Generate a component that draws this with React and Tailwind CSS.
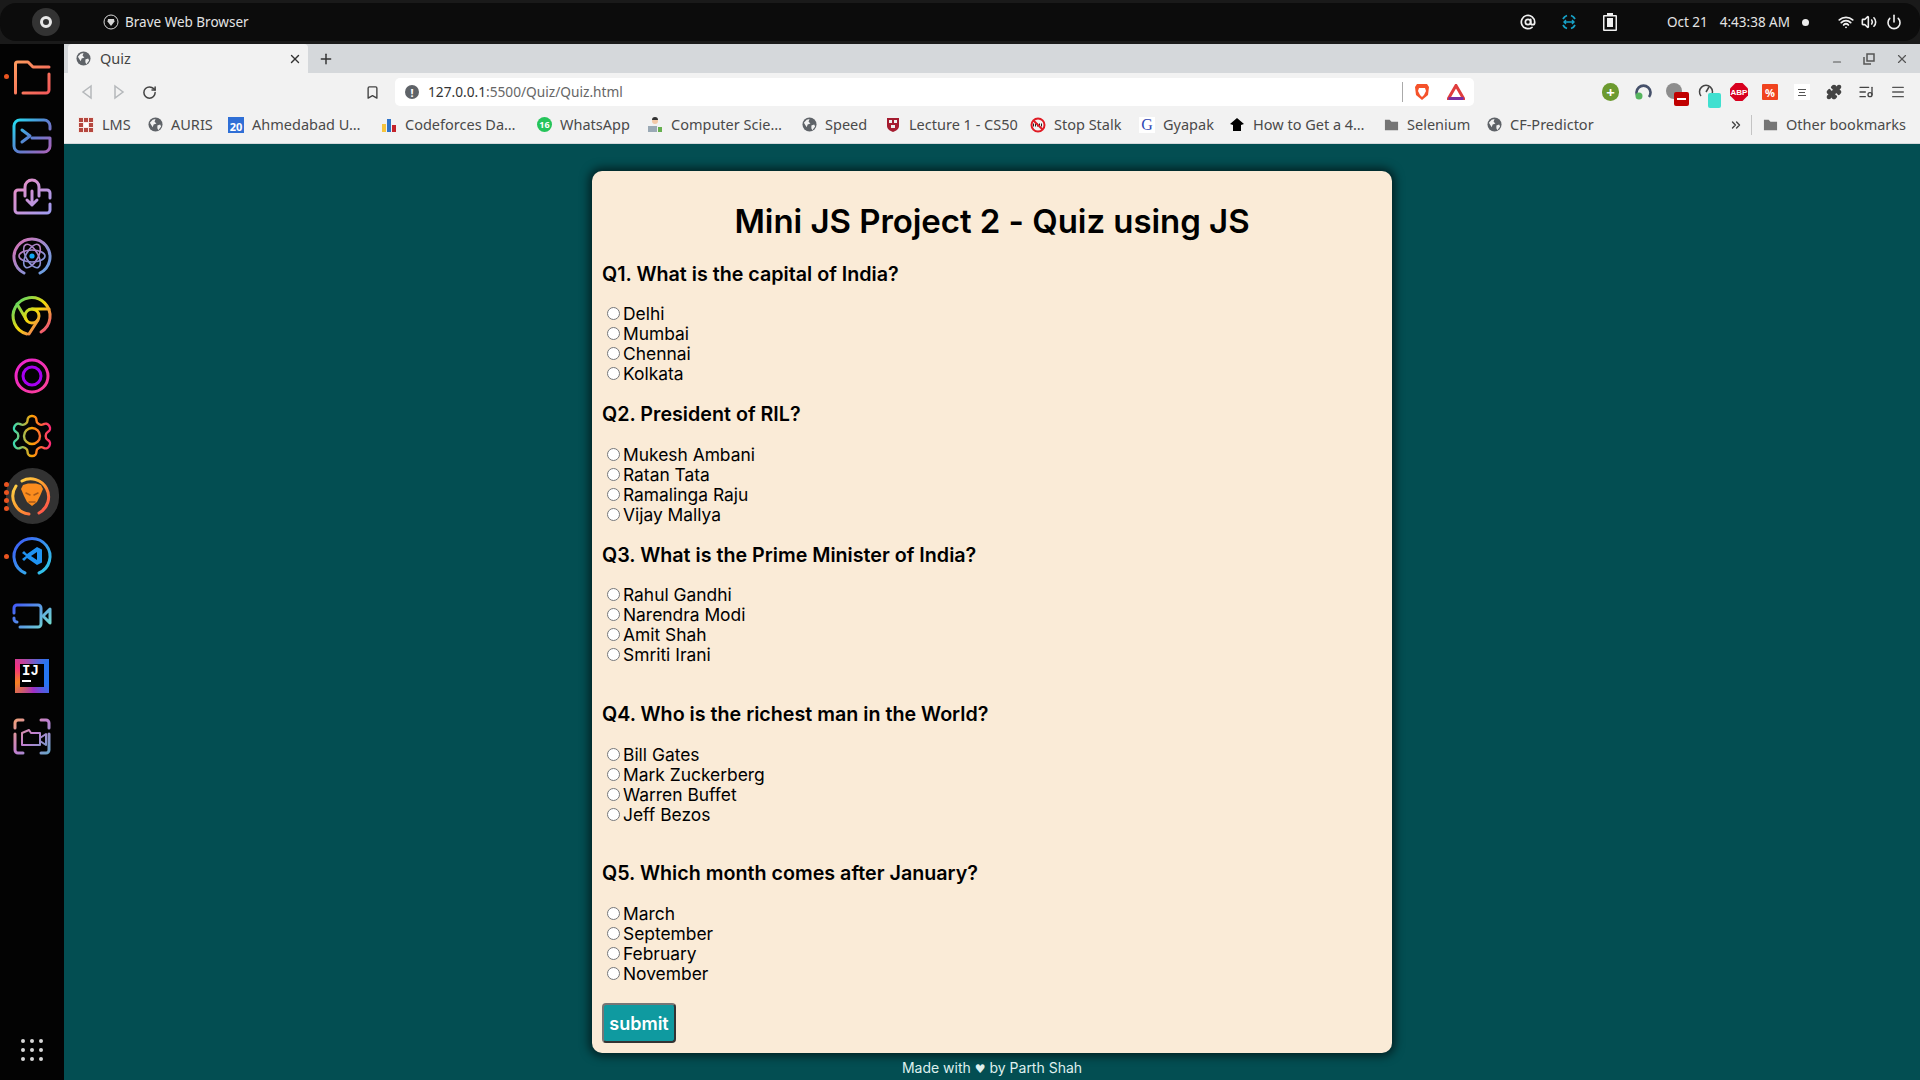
import React from "react";
import { AtSign, Wifi, Volume2, Power, Puzzle, Bookmark, RotateCw, Plus, X, Minus, ChevronsRight, Menu, ListMusic } from "lucide-react";

const questions = [
  { q: "Q1. What is the capital of India?", top: "mt-[21px]", gap: "mt-[18px]", options: ["Delhi", "Mumbai", "Chennai", "Kolkata"] },
  { q: "Q2. President of RIL?", top: "mt-[18px]", gap: "mt-[19px]", options: ["Mukesh Ambani", "Ratan Tata", "Ramalinga Raju", "Vijay Mallya"] },
  { q: "Q3. What is the Prime Minister of India?", top: "mt-[18px]", gap: "mt-[18px]", options: ["Rahul Gandhi", "Narendra Modi", "Amit Shah", "Smriti Irani"] },
  { q: "Q4. Who is the richest man in the World?", top: "mt-[37px]", gap: "mt-[19px]", options: ["Bill Gates", "Mark Zuckerberg", "Warren Buffet", "Jeff Bezos"] },
  { q: "Q5. Which month comes after January?", top: "mt-[36px]", gap: "mt-[19px]", options: ["March", "September", "February", "November"] },
];

// gradient-stroked dock icon, 48 box centred in a 60px row
function DockIcon({ id, stops, children, active, dots }) {
  return (
    <div className="relative flex h-[60px] w-16 items-center justify-center">
      {active && <div className="absolute left-[6px] top-[2px] h-[56px] w-[53px] rounded-full bg-[#323232]" />}
      {dots && (
        <div className="absolute left-[4px] top-0 flex h-full flex-col justify-center gap-[3px]">
          {Array.from({ length: dots }).map((_, i) => (
            <div key={i} className="h-[5px] w-[5px] rounded-full bg-[#e95420]" />
          ))}
        </div>
      )}
      <svg viewBox="0 0 48 48" className="relative h-12 w-12" fill="none" stroke={`url(#${id})`} strokeWidth="3" strokeLinecap="round" strokeLinejoin="round">
        <defs>
          <linearGradient id={id} gradientUnits="userSpaceOnUse" x1="5" y1="5" x2="43" y2="43">
            {stops.map((c, i) => (
              <stop key={i} offset={i / (stops.length - 1)} stopColor={c} />
            ))}
          </linearGradient>
        </defs>
        {children}
      </svg>
    </div>
  );
}

function Dock() {
  return (
    <div className="flex w-16 shrink-0 flex-col items-center bg-[#030303] pt-[2px]">
      <DockIcon id="d1" stops={["#ffa25e", "#f2555a"]} dots={1}>
        <path d="M7.500 41V12a2 2 0 0 1 2-2H20l5 5h16" />
        <path d="M15 41h23a3 3 0 0 0 3-3V22" />
      </DockIcon>
      <DockIcon id="d2" stops={["#1de9f6", "#5a7fd0", "#b65fb5"]}>
        <path d="M42 17v-3a6 6 0 0 0-6-6H12a6 6 0 0 0-6 6v20a6 6 0 0 0 6 6h24a6 6 0 0 0 6-6v-8H24" />
        <path d="M14 18l8 6-8 6" />
      </DockIcon>
      <DockIcon id="d3" stops={["#f48cc0", "#9c9cf2"]}>
        <path d="M16 18h-6a3 3 0 0 0-3 3v17a3 3 0 0 0 3 3h29a3 3 0 0 0 3-3v-6" />
        <path d="M42 26v-5a3 3 0 0 0-3-3h-6" />
        <path d="M17 24v-9a7 7 0 0 1 14 0v9" />
        <path d="M24 19v14M19 28l5 5 5-5" />
      </DockIcon>
      <DockIcon id="d4" stops={["#e26db0", "#5aa6ea"]}>
        <path d="M16 41a18 18 0 1 1 16 0" />
        <ellipse cx="24" cy="24" rx="13" ry="6" strokeWidth="1.600" />
        <ellipse cx="24" cy="24" rx="13" ry="6" strokeWidth="1.600" transform="rotate(60 24 24)" />
        <ellipse cx="24" cy="24" rx="13" ry="6" strokeWidth="1.600" transform="rotate(120 24 24)" />
        <circle cx="24" cy="24" r="2.600" fill="#12a5f4" stroke="none" />
      </DockIcon>
      <DockIcon id="d5" stops={["#37d67a", "#f5d90a", "#f0269a"]}>
        <path d="M19 42A18.500 18.500 0 1 1 33 40" />
        <circle cx="24" cy="24" r="7" />
        <path d="M24 17h17M18 27L9 12M30 28l-9 14" />
      </DockIcon>
      <DockIcon id="d6" stops={["#e81fd8", "#ff4590"]}>
        <circle cx="24" cy="24" r="16" />
        <circle cx="24" cy="24" r="9" stroke="#a600f0" strokeWidth="3" />
      </DockIcon>
      <DockIcon id="d7" stops={["#27e0c0", "#ffa000", "#ff2080"]}>
        <g transform="scale(2)" strokeWidth="1.200" stroke="url(#d7s)">
          <defs>
            <linearGradient id="d7s" gradientUnits="userSpaceOnUse" x1="2" y1="12" x2="22" y2="12">
              <stop offset="0" stopColor="#27e0c0" />
              <stop offset="0.5" stopColor="#ffa000" />
              <stop offset="1" stopColor="#ff2080" />
            </linearGradient>
          </defs>
          <path d="M12.220 2h-.44a2 2 0 0 0-2 2v.18a2 2 0 0 1-1 1.730l-.43.25a2 2 0 0 1-2 0l-.15-.08a2 2 0 0 0-2.730.73l-.22.38a2 2 0 0 0 .73 2.730l.15.1a2 2 0 0 1 1 1.720v.51a2 2 0 0 1-1 1.740l-.15.09a2 2 0 0 0-.73 2.730l.22.38a2 2 0 0 0 2.730.73l.15-.08a2 2 0 0 1 2 0l.43.25a2 2 0 0 1 1 1.730V20a2 2 0 0 0 2 2h.44a2 2 0 0 0 2-2v-.18a2 2 0 0 1 1-1.730l.43-.25a2 2 0 0 1 2 0l.15.08a2 2 0 0 0 2.730-.73l.22-.39a2 2 0 0 0-.73-2.730l-.15-.08a2 2 0 0 1-1-1.740v-.5a2 2 0 0 1 1-1.740l.15-.09a2 2 0 0 0 .73-2.730l-.22-.38a2 2 0 0 0-2.730-.73l-.15.08a2 2 0 0 1-2 0l-.43-.25a2 2 0 0 1-1-1.730V4a2 2 0 0 0-2-2z" />
          <circle cx="12" cy="12" r="4" />
        </g>
      </DockIcon>
      <DockIcon id="d8" stops={["#ffe14d", "#ff9a2e", "#ff3d55"]} active dots={4}>
        <path d="M21 42A18 18 0 0 1 8 14M14 9A18 18 0 1 1 31 41" />
        <path d="M15 13l5-1.500h8l5 1.500 2 4-3 7-3 6-5 4-5-4-3-6-3-7z" fill="#fb8c1e" stroke="none" />
        <path d="M18 21l4 2M30 21l-4 2M21 30h6" stroke="#a85a18" strokeWidth="1.500" />
      </DockIcon>
      <DockIcon id="d9" stops={["#3f50f6", "#2fd6e8"]} dots={1}>
        <path d="M17 41A18 18 0 1 1 31 41" />
        <path fillRule="evenodd" d="M29 15l5 2.500v13L29 33 19 26l-3 3-2-2 4-3-4-3 2-2 3 3zM29 20l-6 4 6 4z" fill="#1f93f2" stroke="none" />
      </DockIcon>
      <DockIcon id="d10" stops={["#3a46ff", "#7df5c8"]}>
        <path d="M6 21v-5a3 3 0 0 1 3-3h21a3 3 0 0 1 3 3v16a3 3 0 0 1-3 3H12" />
        <path d="M6 26v1a3 3 0 0 0 3 3" />
        <path d="M35 24l7-7v14z" />
      </DockIcon>
      <div className="flex h-[60px] w-16 items-center justify-center">
        <div className="h-[34px] w-[34px] bg-[conic-gradient(from_300deg,#f5317f,#2676f2_30%,#2676f2_50%,#a02fc4_65%,#f58220_85%,#f5317f)] pb-[6px] pl-[5px] pr-[5px] pt-[5px]">
          <div className="flex h-full w-full flex-col bg-black pl-[2px] text-white">
            <span className="font-['Liberation_Mono',monospace] text-[14px] font-bold leading-[15px]">IJ</span>
            <span className="mt-[1px] h-[2px] w-[9px] bg-white" />
          </div>
        </div>
      </div>
      <DockIcon id="d12" stops={["#f6a56e", "#c07fd0", "#5ea8c8"]}>
        <path d="M7 16v-5a3 3 0 0 1 3-3h5M33 8h5a3 3 0 0 1 3 3v5M41 22v16a3 3 0 0 1-3 3h-5M15 41h-5a3 3 0 0 1-3-3V22" />
        <path d="M14 33V21l7-3 2 3h9v12z" strokeWidth="2" />
        <path d="M32 26l6-4v11l-6-4" strokeWidth="2" />
      </DockIcon>
      <div className="mt-auto mb-[19px] grid grid-cols-3 gap-[5px]">
        {Array.from({ length: 9 }).map((_, i) => (
          <div key={i} className="h-[4px] w-[4px] rounded-full bg-[#d8d8d8]" />
        ))}
      </div>
    </div>
  );
}

function TopBar() {
  return (
    <div className="h-[44px] shrink-0 bg-[#1a1a1a] pt-[3px]">
      <div className="flex h-[38px] items-center rounded-[16px] bg-[#0c0c0c] text-[13.500px] text-[#e4e4e4]">
        <div className="ml-[32px] flex h-[28px] w-[28px] items-center justify-center rounded-full bg-[#333333]">
          <div className="h-[12px] w-[12px] rounded-full border-[3px] border-[#e8e8e8]" />
        </div>
        <svg viewBox="0 0 16 16" className="ml-[43px] h-4 w-4" fill="none" stroke="#d8d8d8">
          <circle cx="8" cy="8" r="7" />
          <path d="M5 5h6l.500 2.500L8 12 4.500 7.500z" fill="#d8d8d8" stroke="none" />
        </svg>
        <span className="ml-[6px]">Brave Web Browser</span>
        <AtSign className="ml-auto h-4 w-4" strokeWidth={2.6} color="#f0f0f0" />
        <svg viewBox="0 0 18 18" className="ml-[24px] h-[18px] w-[18px]" fill="none" stroke="#17a2c8" strokeWidth="1.800">
          <path d="M3 6a7 7 0 0 1 4-3.500M11 2.500A7 7 0 0 1 15 6M3 12a7 7 0 0 0 4 3.500M11 15.500a7 7 0 0 0 4-3.500" />
          <path d="M4 9h10M6 7L4 9l2 2M12 7l2 2-2 2" strokeWidth="1.400" />
        </svg>
        <svg viewBox="0 0 14 18" className="ml-[25px] h-[18px] w-[14px]" fill="#f0f0f0">
          <path d="M4 0h6v2h3a1 1 0 0 1 1 1v14a1 1 0 0 1-1 1H1a1 1 0 0 1-1-1V3a1 1 0 0 1 1-1h3zM1.500 3.500v13h11v-13z" />
          <rect x="4" y="5" width="6" height="9" />
        </svg>
        <span className="ml-[50px]">Oct 21</span>
        <span className="ml-[12px]">4:43:38 AM</span>
        <div className="ml-[12px] h-[7px] w-[7px] rounded-full bg-[#eeeeee]" />
        <Wifi className="ml-[29px] h-4 w-4" strokeWidth={2.8} color="#f0f0f0" />
        <Volume2 className="ml-[7px] h-4 w-4" strokeWidth={2.4} color="#f0f0f0" />
        <Power className="ml-[9px] mr-[18px] h-4 w-4" strokeWidth={2.4} color="#f0f0f0" />
      </div>
    </div>
  );
}

const GlobeIcon = () => (
  <svg viewBox="0 0 16 16" className="h-[15px] w-[15px] shrink-0">
    <circle cx="8" cy="8" r="7.500" fill="#5f6368" />
    <path d="M2 6l3-3 3-1-1 3 2 2-3 1-1 3zM10 9l3-1 1 2-3 4-1-2z" fill="#f2f2f2" />
  </svg>
);

const FolderIcon = () => (
  <svg viewBox="0 0 16 16" className="h-[15px] w-[15px] shrink-0" fill="#757575">
    <path d="M1 3h5l2 2h7v9H1z" />
  </svg>
);

const bookmarks = [
  { label: "LMS", w: "w-[70px]", icon: <div className="grid h-4 w-4 shrink-0 grid-cols-3 gap-[1px] bg-[#f6e8e4] p-[1px]">{[0, 1, 2, 3, 4, 5, 6, 7, 8].map((i) => <div key={i} className={i === 4 ? "bg-white" : "bg-[#b5473f]"} />)}</div> },
  { label: "AURIS", w: "w-[80px]", icon: <GlobeIcon /> },
  { label: "Ahmedabad U…", w: "w-[153px]", icon: <div className="flex h-4 w-4 shrink-0 items-end justify-center bg-[#2f6fd6] text-[11px] font-bold leading-[13px] text-white">20</div> },
  {
    label: "Codeforces Da…", w: "w-[156px]",
    icon: (
      <svg viewBox="0 0 16 16" className="h-4 w-4 shrink-0">
        <rect x="1" y="7" width="4" height="8" fill="#f6c43d" />
        <rect x="6" y="2" width="4" height="13" fill="#2f74c9" />
        <rect x="11" y="8" width="4" height="7" fill="#c4232b" />
      </svg>
    ),
  },
  { label: "WhatsApp", w: "w-[110px]", icon: <div className="flex h-[15px] w-[15px] shrink-0 items-center justify-center rounded-full bg-[#25c45a] text-[9px] font-bold text-white">16</div> },
  {
    label: "Computer Scie…", w: "w-[155px]",
    icon: (
      <svg viewBox="0 0 16 16" className="h-4 w-4 shrink-0">
        <circle cx="8" cy="4" r="3" fill="#f2c9a8" />
        <path d="M5 3a3 3 0 0 1 6 0z" fill="#333" />
        <rect x="1" y="9" width="9" height="6" fill="#9aa9b5" />
        <rect x="11" y="10" width="4" height="5" fill="#66b04f" />
      </svg>
    ),
  },
  { label: "Speed", w: "w-[83px]", icon: <GlobeIcon /> },
  {
    label: "Lecture 1 - CS50", w: "w-[145px]",
    icon: (
      <svg viewBox="0 0 16 16" className="h-4 w-4 shrink-0">
        <path d="M2 1h12v8c0 3-3 5-6 6-3-1-6-3-6-6z" fill="#a51c30" />
        <rect x="4" y="3" width="3" height="3" fill="#eee" />
        <rect x="9" y="3" width="3" height="3" fill="#eee" />
        <rect x="6" y="8" width="4" height="3" fill="#eee" />
      </svg>
    ),
  },
  {
    label: "Stop Stalk", w: "w-[109px]",
    icon: (
      <svg viewBox="0 0 16 16" className="h-4 w-4 shrink-0" fill="none">
        <circle cx="8" cy="8" r="6.500" stroke="#e01b24" strokeWidth="2" />
        <path d="M3 8h10" stroke="#222" strokeWidth="3" strokeDasharray="1 1" />
        <path d="M3.500 3.500l9 9" stroke="#e01b24" strokeWidth="2" />
      </svg>
    ),
  },
  { label: "Gyapak", w: "w-[90px]", icon: <div className="flex h-4 w-4 shrink-0 items-center justify-center bg-white font-['Liberation_Serif',serif] text-[16px] leading-4 text-[#2f49b5]">G</div> },
  {
    label: "How to Get a 4…", w: "w-[155px]",
    icon: (
      <svg viewBox="0 0 16 16" className="h-4 w-4 shrink-0" fill="#000">
        <path d="M8 1l7 6-3 1v6H4V8L1 7z" />
      </svg>
    ),
  },
  { label: "Selenium", w: "w-[103px]", icon: <FolderIcon /> },
  { label: "CF-Predictor", w: "w-[120px]", icon: <GlobeIcon /> },
];

function Browser() {
  return (
    <div className="shrink-0 bg-[#f2f2f2] font-['Noto_Sans',sans-serif] text-[#4a4a4a]">
      <div className="flex h-[29px] items-center bg-[#d5d8db]">
        <div className="ml-[4px] flex h-full w-[240px] items-center rounded-t-[4px] bg-[#f2f2f2] pl-[8px] pr-[6px]">
          <GlobeIcon />
          <span className="ml-[9px] text-[14.500px] text-[#444]">Quiz</span>
          <X className="ml-auto h-[14px] w-[14px]" strokeWidth={2.4} color="#333" />
        </div>
        <Plus className="ml-[10px] h-[16px] w-[16px]" strokeWidth={2.2} color="#333" />
        <Minus className="ml-auto mt-[6px] h-[12px] w-[12px]" strokeWidth={2.4} color="#555" />
        <svg viewBox="0 0 12 12" className="ml-[20px] h-[12px] w-[12px]" fill="none" stroke="#555" strokeWidth="1.500">
          <rect x="4" y="1" width="7" height="7" />
          <path d="M1 4v7h7" />
        </svg>
        <X className="ml-[20px] mr-[11px] h-[14px] w-[14px]" strokeWidth={2} color="#555" />
      </div>
      <div className="flex h-[33px] items-center pt-[5px]">
        <svg viewBox="0 0 12 16" className="ml-[17px] h-[16px] w-[12px]" fill="none" stroke="#b5b8bb" strokeWidth="1.500">
          <path d="M10 2L2 8l8 6z" />
        </svg>
        <svg viewBox="0 0 12 16" className="ml-[20px] h-[16px] w-[12px]" fill="none" stroke="#b5b8bb" strokeWidth="1.500">
          <path d="M2 2l8 6-8 6z" />
        </svg>
        <RotateCw className="ml-[17px] h-[15px] w-[15px]" strokeWidth={2.4} color="#444" />
        <Bookmark className="ml-[208px] h-[15px] w-[15px]" strokeWidth={2.2} color="#444" />
        <div className="ml-[15px] flex h-[28px] w-[1079px] items-center rounded-[5px] bg-white pl-[10px] pr-[9px]">
          <div className="flex h-[14px] w-[14px] items-center justify-center rounded-full bg-[#5f6368] text-[11px] font-bold leading-none text-white">!</div>
          <span className="ml-[9px] text-[13.700px]">
            <span className="text-[#333]">127.0.0.1</span>
            <span className="text-[#666]">:5500/Quiz/Quiz.html</span>
          </span>
          <div className="ml-auto h-[20px] w-px bg-[#aaaaaa]" />
          <svg viewBox="0 0 16 18" className="ml-[11px] h-[18px] w-[16px]">
            <path d="M3 1h10l2 3-1 8-6 5-6-5-1-8z" fill="#f5522a" />
            <path d="M5 5h6l1 3-2 4-2 2-2-2-2-4z" fill="#fff" />
          </svg>
          <svg viewBox="0 0 18 16" className="ml-[17px] h-[16px] w-[18px]" fill="none">
            <path d="M9 1.500L1.500 14.500h15z" stroke="#e03d3d" strokeWidth="3" />
            <path d="M1.500 14.500h15" stroke="#7a2fa0" strokeWidth="3" />
          </svg>
        </div>
        <div className="ml-[128px] flex h-[18px] w-[17px] items-center justify-center rounded-full bg-[#6c9a2f] text-[15px] font-bold leading-none text-white">+</div>
        <svg viewBox="0 0 18 18" className="ml-[15px] h-[18px] w-[18px]" fill="none">
          <path d="M4 14A7 7 0 1 1 15 14" stroke="#45506a" strokeWidth="2.600" />
          <circle cx="5" cy="13" r="3.500" fill="#56b45e" />
        </svg>
        <div className="relative ml-[14px] h-[18px] w-[18px]">
          <div className="h-4 w-4 rounded-full bg-[#8d8d8d]" />
          <div className="absolute -bottom-[5px] -right-[5px] flex h-[14px] w-[15px] items-center justify-center rounded-[2px] bg-[#c00000]">
            <div className="h-[2px] w-[9px] bg-white" />
          </div>
        </div>
        <div className="relative ml-[14px] h-[18px] w-[18px]">
          <svg viewBox="0 0 16 16" className="h-4 w-4" fill="none" stroke="#444" strokeWidth="1.500">
            <path d="M3 13a6.500 6.500 0 1 1 10 0" />
            <path d="M8 9l3-5" />
          </svg>
          <div className="absolute -bottom-[7px] -right-[5px] h-[15px] w-[13px] rounded-[2px] bg-[#40e0d0]" />
        </div>
        <svg viewBox="0 0 18 18" className="ml-[14px] h-[18px] w-[18px]">
          <path d="M5.500 0h7L18 5.500v7L12.500 18h-7L0 12.500v-7z" fill="#d8001f" />
          <text x="9" y="12" textAnchor="middle" fontSize="8" fontWeight="700" fill="#fff" fontFamily="Liberation Sans, sans-serif">ABP</text>
        </svg>
        <div className="ml-[14px] flex h-4 w-4 items-center justify-center rounded-[1px] bg-[#f0431f] text-[11px] font-bold leading-none text-white">%</div>
        <div className="ml-[16px] flex h-4 w-4 flex-col items-center justify-center gap-[2px] bg-white">
          <div className="h-px w-[8px] bg-[#555]" />
          <div className="h-px w-[6px] bg-[#555]" />
          <div className="h-px w-[8px] bg-[#555]" />
        </div>
        <Puzzle className="ml-[16px] h-4 w-4" fill="#444" color="#444" />
        <ListMusic className="ml-[16px] h-4 w-4" strokeWidth={2} color="#444" />
        <Menu className="ml-[16px] h-4 w-4" strokeWidth={2} color="#555" />
      </div>
      <div className="flex h-[38px] items-center border-b border-[#d5d8db] pl-[14px] text-[14.500px]">
        {bookmarks.map((b) => (
          <div key={b.label} className={`flex items-center gap-[8px] ${b.w}`}>
            {b.icon}
            <span className="whitespace-nowrap">{b.label}</span>
          </div>
        ))}
        <ChevronsRight className="ml-auto h-[14px] w-[14px]" strokeWidth={2.4} color="#444" />
        <div className="ml-[8px] h-[20px] w-px bg-[#c4c4c4]" />
        <div className="ml-[11px] mr-[14px] flex items-center gap-[8px]">
          <FolderIcon />
          <span>Other bookmarks</span>
        </div>
      </div>
    </div>
  );
}

function Quiz() {
  return (
    <div className="flex min-h-0 flex-1 flex-col items-center overflow-hidden bg-[#034e52] pt-[27px] font-['Inter',sans-serif]">
      <form className="w-[800px] shrink-0 rounded-[10px] bg-[#faebd7] px-[10px] pb-[10px] pt-[30px] text-black shadow-[0_0_10px_3px_rgba(0,0,0,0.6)]">
        <h1 className="text-center text-[33px] font-semibold leading-[40px] tracking-[-0.05px]">Mini JS Project 2 - Quiz using JS</h1>
        {questions.map((item, n) => (
          <div key={item.q} className={item.top}>
            <h3 className="text-[19.700px] font-semibold leading-[24px]">{item.q}</h3>
            <div className={item.gap}>
              {item.options.map((opt) => (
                <div key={opt} className="flex h-[20px] items-center text-[17.400px] leading-[20px]">
                  <input type="radio" name={`q${n}`} className="-mt-px ml-[5px] mr-[3px]" />
                  <label>{opt}</label>
                </div>
              ))}
            </div>
          </div>
        ))}
        <button type="button" className="mt-[19px] h-[40px] w-[74px] rounded-[4px] border-2 border-solid border-t-[#767676] border-l-[#767676] border-r-[#333] border-b-[#333] bg-[#0f9aa0] text-[18px] font-semibold text-white">submit</button>
      </form>
      <p className="mt-[6px] text-[14px] leading-[18px] text-[#dff0ee]">
        Made with <span className="font-['DejaVu_Sans',sans-serif] text-[12px]">♥</span> by Parth Shah
      </p>
    </div>
  );
}

export default function App() {
  return (
    <div className="flex h-screen w-screen flex-col overflow-hidden bg-black font-['Noto_Sans',sans-serif]">
      <TopBar />
      <div className="flex min-h-0 flex-1">
        <Dock />
        <div className="flex min-w-0 flex-1 flex-col">
          <Browser />
          <Quiz />
        </div>
      </div>
    </div>
  );
}
